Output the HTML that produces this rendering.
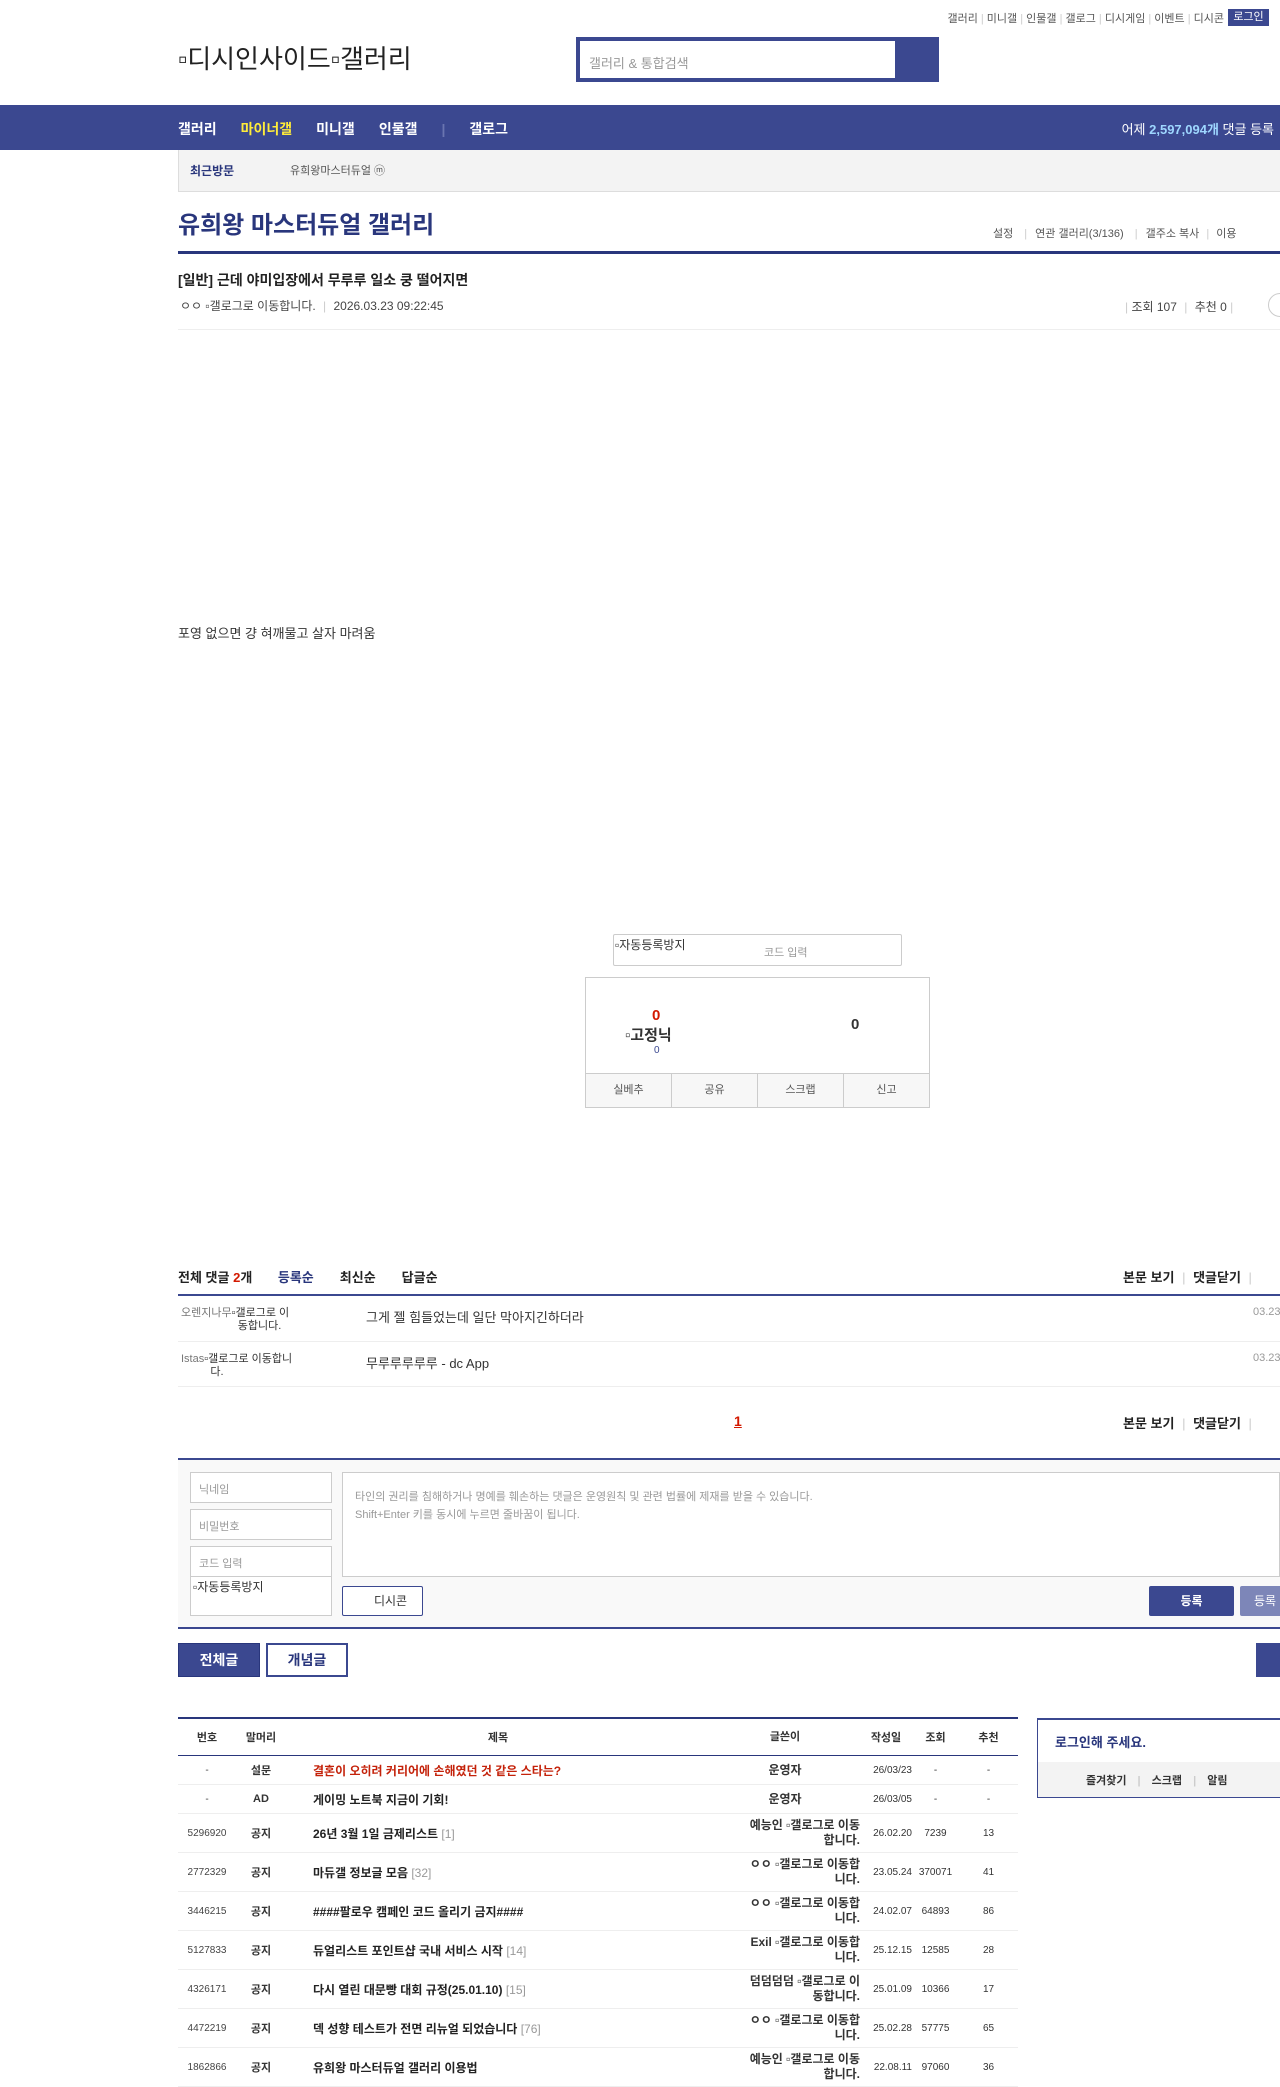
<!DOCTYPE html>
<html><head><meta charset="utf-8"><style>
*{margin:0;padding:0;box-sizing:border-box}
body{width:1280px;height:2078px;position:relative;background:#fff;font-family:"Liberation Sans","Noto Sans CJK KR",sans-serif;color:#333;font-size:12px;overflow:hidden}
.a{position:absolute;white-space:nowrap}
.blue{color:#29367c}
.r{display:flex;align-items:center;border-bottom:1px solid #eee;font-size:11px;text-align:center}
.r>div:nth-child(1){width:58px;color:#444;font-size:10px}
.r>div:nth-child(2){width:50px;font-weight:bold}
.r>div:nth-child(3){width:424px;text-align:left;padding-left:27px;font-weight:bold;font-size:12px;color:#222}
.r>div:nth-child(4){width:150px;font-weight:bold;font-size:12px;text-align:right;line-height:15px}
.r>div:nth-child(5){width:52px;font-size:10px;text-align:right}
.r>div:nth-child(6){width:47px;font-size:10px}
.r>div:nth-child(7){flex:1;font-size:10px}
.c{color:#999;font-weight:normal}
.h>div{font-weight:bold!important;font-size:11px!important;text-align:center!important;color:#333!important;padding-left:0!important}
</style></head><body>
<div class="a" style="right:56px;top:10px;font-size:11px;color:#555">갤러리 <span style="color:#ccc">|</span> 미니갤 <span style="color:#ccc">|</span> 인물갤 <span style="color:#ccc">|</span> 갤로그 <span style="color:#ccc">|</span> 디시게임 <span style="color:#ccc">|</span> 이벤트 <span style="color:#ccc">|</span> 디시콘</div>
<div class="a" style="left:1228px;top:9px;width:41px;height:17px;background:#3b4890;color:#fff;font-size:11px;text-align:center;line-height:17px">로그인</div>
<div class="a" style="left:178px;top:39px;font-size:26px;color:#222">▫디시인사이드▫갤러리</div>
<div class="a" style="left:576px;top:37px;width:363px;height:45px;background:#3b4890"></div>
<div class="a" style="left:580px;top:41px;width:315px;height:37px;background:#fff;padding:12px 9px;color:#999;font-size:13px">갤러리 &amp; 통합검색</div>
<div class="a" style="left:0;top:105px;width:1280px;height:45px;background:#3b4890"></div>
<div class="a" style="left:178px;top:119px;color:#fff;font-size:14px;font-weight:bold">갤러리<span style="color:#ffec3a;margin-left:24px">마이너갤</span><span style="margin-left:24px">미니갤</span><span style="margin-left:24px">인물갤</span><span style="color:#6a75b0;margin:0 24px">|</span>갤로그</div>
<div class="a" style="right:6px;top:119px;color:#fff;font-size:13px">어제 <b style="color:#9ed7ff">2,597,094개</b> 댓글 등록</div>
<div class="a" style="left:178px;top:150px;width:1102px;height:42px;background:#f3f3f3;border-bottom:1px solid #ddd;border-left:1px solid #ddd"></div>
<div class="a" style="left:190px;top:162px;font-size:12px;font-weight:bold;color:#29367c">최근방문</div>
<div class="a" style="left:290px;top:162px;font-size:11px;color:#555">유희왕마스터듀얼 ⓜ</div>
<div class="a blue" style="left:178px;top:205px;font-size:24px;font-weight:bold">유희왕 마스터듀얼 갤러리</div>
<div class="a" style="left:993px;top:225px;font-size:11px;color:#555">설정 <span style="color:#ccc;margin:0 8px">|</span>연관 갤러리(3/136) <span style="color:#ccc;margin:0 8px">|</span>갤주소 복사 <span style="color:#ccc;margin:0 4px">|</span> 이용</div>
<div class="a" style="left:178px;top:251px;width:1102px;height:3px;background:#29367c"></div>
<div class="a" style="left:178px;top:270px;font-size:14px;font-weight:bold;color:#222">[일반] 근데 야미입장에서 무루루 일소 쿵 떨어지면</div>
<div class="a" style="left:180px;top:297px;font-size:12px;color:#444">ㅇㅇ ▫갤로그로 이동합니다. <span style="color:#ccc;margin:0 4px">|</span> 2026.03.23 09:22:45</div>
<div class="a" style="left:1125px;top:298px;font-size:12px;color:#444"><span style="color:#ccc">|</span> 조회 107 <span style="color:#ccc;margin:0 4px">|</span> 추천 0 <span style="color:#ccc">|</span></div>
<div class="a" style="left:1268px;top:293px;width:24px;height:24px;border:1px solid #ccc;border-radius:50%"></div>
<div class="a" style="left:178px;top:329px;width:1102px;height:1px;background:#eee"></div>
<div class="a" style="left:178px;top:623px;font-size:13px;color:#333">포영 없으면 걍 혀깨물고 살자 마려움</div>
<div class="a" style="left:613px;top:934px;width:289px;height:32px;border:1px solid #ccc;border-radius:2px"></div>
<div class="a" style="left:615px;top:936px;font-size:12px">▫자동등록방지</div>
<div class="a" style="left:764px;top:944px;font-size:11px;color:#999">코드 입력</div>
<div class="a" style="left:585px;top:977px;width:345px;height:131px;border:1px solid #ccc"></div>
<div class="a" style="left:585px;top:1073px;width:345px;height:35px;background:#f7f7f7;border:1px solid #ccc;display:flex">
<div style="flex:1;border-right:1px solid #ccc;text-align:center;line-height:33px;color:#555;font-size:11px">실베추</div><div style="flex:1;border-right:1px solid #ccc;text-align:center;line-height:33px;color:#555;font-size:11px">공유</div><div style="flex:1;border-right:1px solid #ccc;text-align:center;line-height:33px;color:#555;font-size:11px">스크랩</div><div style="flex:1;text-align:center;line-height:33px;color:#555;font-size:11px">신고</div></div>
<div class="a" style="left:652px;top:1007px;font-size:15px;font-weight:bold;color:#d31900">0</div>
<div class="a" style="left:625px;top:1024px;font-size:15px;font-weight:bold;color:#333">▫고정닉</div>
<div class="a" style="left:654px;top:1045px;font-size:10px;color:#3b4890">0</div>
<div class="a" style="left:851px;top:1016px;font-size:15px;font-weight:bold;color:#333">0</div>
<div class="a" style="left:178px;top:1267px;font-size:13px;font-weight:bold;color:#222">전체 댓글 <span style="color:#d31900">2</span>개 <span style="color:#29367c;margin-left:22px">등록순</span><span style="margin-left:26px">최신순</span><span style="margin-left:26px">답글순</span></div>
<div class="a" style="left:1123px;top:1267px;font-size:13px;font-weight:bold;color:#222">본문 보기 <span style="color:#ccc;font-weight:normal;margin:0 4px">|</span> 댓글닫기 <span style="color:#ccc;font-weight:normal;margin-left:4px">|</span></div>
<div class="a" style="left:178px;top:1294px;width:1102px;height:2px;background:#3b4890"></div>
<div class="a" style="left:181px;top:1307px;font-size:11px;color:#777;line-height:13px">오렌지나무<span style="color:#333;display:inline-block;vertical-align:top">▫갤로그로 이<br>&nbsp;&nbsp;동합니다.</span></div>
<div class="a" style="left:366px;top:1307px;font-size:13px">그게 젤 힘들었는데 일단 막아지긴하더라</div>
<div class="a" style="left:1253px;top:1306px;font-size:11px;color:#999">03.23</div>
<div class="a" style="left:178px;top:1341px;width:1102px;height:1px;background:#eee"></div>
<div class="a" style="left:181px;top:1353px;font-size:11px;color:#777;line-height:13px">Istas<span style="color:#333;display:inline-block;vertical-align:top">▫갤로그로 이동합니<br>&nbsp;&nbsp;다.</span></div>
<div class="a" style="left:366px;top:1353px;font-size:13px">무루루루루루 - dc App</div>
<div class="a" style="left:1253px;top:1352px;font-size:11px;color:#999">03.23</div>
<div class="a" style="left:178px;top:1386px;width:1102px;height:1px;background:#eee"></div>
<div class="a" style="left:734px;top:1413px;font-size:14px;font-weight:bold;color:#d31900;text-decoration:underline">1</div>
<div class="a" style="left:1123px;top:1413px;font-size:13px;font-weight:bold;color:#222">본문 보기 <span style="color:#ccc;font-weight:normal;margin:0 4px">|</span> 댓글닫기 <span style="color:#ccc;font-weight:normal;margin-left:4px">|</span></div>
<div class="a" style="left:178px;top:1458px;width:1102px;height:171px;background:#f9f9f9;border-top:2px solid #3b4890;border-bottom:2px solid #3b4890"></div>
<div class="a" style="left:190px;top:1472px;width:142px;height:31px;border:1px solid #ccc;background:#fff;padding:8px;color:#999;font-size:11px">닉네임</div>
<div class="a" style="left:190px;top:1509px;width:142px;height:31px;border:1px solid #ccc;background:#fff;padding:8px;color:#999;font-size:11px">비밀번호</div>
<div class="a" style="left:190px;top:1546px;width:142px;height:31px;border:1px solid #ccc;background:#fff;padding:8px;color:#999;font-size:11px">코드 입력</div>
<div class="a" style="left:190px;top:1576px;width:142px;height:40px;border:1px solid #ccc;background:#fff;padding:1px 2px;font-size:12px">▫자동등록방지</div>
<div class="a" style="left:342px;top:1472px;width:938px;height:105px;border:1px solid #ccc;background:#fff;padding:15px 12px;color:#999;font-size:11px;line-height:18px">타인의 권리를 침해하거나 명예를 훼손하는 댓글은 운영원칙 및 관련 법률에 제재를 받을 수 있습니다.<br>Shift+Enter 키를 동시에 누르면 줄바꿈이 됩니다.</div>
<div class="a" style="left:342px;top:1586px;width:81px;height:30px;border:1px solid #3b4890;border-radius:2px;background:#fff;text-align:center;line-height:28px;font-size:12px;color:#333;padding-left:16px">디시콘</div>
<div class="a" style="left:1149px;top:1586px;width:85px;height:30px;background:#3b4890;border-radius:2px;color:#fff;text-align:center;line-height:30px;font-size:12px;font-weight:bold">등록</div>
<div class="a" style="left:1240px;top:1586px;width:60px;height:30px;background:#7d86b8;border-radius:2px;color:#fff;line-height:30px;font-size:12px;padding-left:14px">등록</div>
<div class="a" style="left:178px;top:1643px;width:82px;height:34px;background:#3b4890;border:1px solid #29367c;color:#fff;text-align:center;line-height:32px;font-size:14px;font-weight:bold">전체글</div>
<div class="a" style="left:266px;top:1643px;width:82px;height:34px;background:#fff;border:2px solid #3b4890;color:#29367c;text-align:center;line-height:30px;font-size:14px;font-weight:bold">개념글</div>
<div class="a" style="left:1256px;top:1643px;width:40px;height:34px;background:#3b4890"></div>
<div class="a" style="left:178px;top:1717px;width:840px;border-top:2px solid #29367c">
<div class="r h" style="height:37px;border-bottom:1px solid #29367c"><div>번호</div><div>말머리</div><div>제목</div><div>글쓴이</div><div>작성일</div><div>조회</div><div>추천</div></div>
<div class="r" style="height:29px"><div>-</div><div>설문</div><div style="color:#c4220a">결혼이 오히려 커리어에 손해였던 것 같은 스타는?</div><div style="text-align:center">운영자</div><div>26/03/23</div><div>-</div><div>-</div></div>
<div class="r" style="height:29px"><div>-</div><div>AD</div><div>게이밍 노트북 지금이 기회!</div><div style="text-align:center">운영자</div><div>26/03/05</div><div>-</div><div>-</div></div>
<div class="r" style="height:39px"><div>5296920</div><div>공지</div><div>26년 3월 1일 금제리스트 <span class="c">[1]</span></div><div>예능인 ▫갤로그로 이동<br>합니다.</div><div>26.02.20</div><div>7239</div><div>13</div></div>
<div class="r" style="height:39px"><div>2772329</div><div>공지</div><div>마듀갤 정보글 모음 <span class="c">[32]</span></div><div>ㅇㅇ ▫갤로그로 이동합<br>니다.</div><div>23.05.24</div><div>370071</div><div>41</div></div>
<div class="r" style="height:39px"><div>3446215</div><div>공지</div><div>####팔로우 캠페인 코드 올리기 금지####</div><div>ㅇㅇ ▫갤로그로 이동합<br>니다.</div><div>24.02.07</div><div>64893</div><div>86</div></div>
<div class="r" style="height:39px"><div>5127833</div><div>공지</div><div>듀얼리스트 포인트샵 국내 서비스 시작 <span class="c">[14]</span></div><div>Exil ▫갤로그로 이동합<br>니다.</div><div>25.12.15</div><div>12585</div><div>28</div></div>
<div class="r" style="height:39px"><div>4326171</div><div>공지</div><div>다시 열린 대문빵 대회 규정(25.01.10) <span class="c">[15]</span></div><div>덤덤덤덤 ▫갤로그로 이<br>동합니다.</div><div>25.01.09</div><div>10366</div><div>17</div></div>
<div class="r" style="height:39px"><div>4472219</div><div>공지</div><div>덱 성향 테스트가 전면 리뉴얼 되었습니다 <span class="c">[76]</span></div><div>ㅇㅇ ▫갤로그로 이동합<br>니다.</div><div>25.02.28</div><div>57775</div><div>65</div></div>
<div class="r" style="height:39px"><div>1862866</div><div>공지</div><div>유희왕 마스터듀얼 갤러리 이용법</div><div>예능인 ▫갤로그로 이동<br>합니다.</div><div>22.08.11</div><div>97060</div><div>36</div></div>
</div>
<div class="a" style="left:1037px;top:1718px;width:260px;height:80px;border:1px solid #3b4890;border-top:2px solid #3b4890"></div>
<div class="a blue" style="left:1055px;top:1732px;font-size:13px;font-weight:bold">로그인해 주세요.</div>
<div class="a" style="left:1038px;top:1762px;width:250px;height:35px;background:#f3f3f3"></div>
<div class="a" style="left:1086px;top:1772px;font-size:11px;color:#333;font-weight:bold">즐겨찾기 <span style="color:#ccc;margin:0 8px">|</span> 스크랩 <span style="color:#ccc;margin:0 8px">|</span> 알림</div>
</body></html>
